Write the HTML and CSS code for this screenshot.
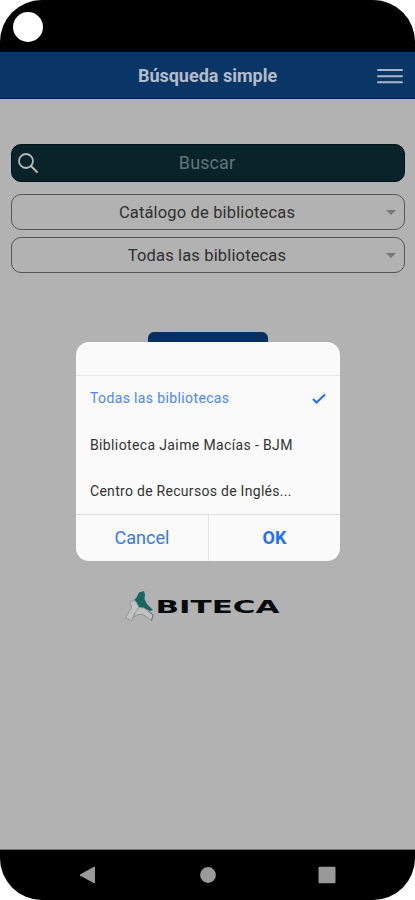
FILE: index.html
```html
<!DOCTYPE html>
<html lang="es">
<head>
<meta charset="utf-8">
<title>Búsqueda simple</title>
<link rel="stylesheet" href="styles.css">
</head>
<body>
<div class="phone">
  <div class="status"><span class="camera"></span></div>
  <header class="bar">
    <h1>Búsqueda simple</h1>
    <svg class="menu" width="26" height="16" viewBox="0 0 26 16"><path d="M1 2H25M1 8.2H25M1 14.3H25" stroke="#aab7c5" stroke-width="2" stroke-linecap="round"/></svg>
  </header>
  <main class="page">
    <div class="search">
      <svg class="lens" width="22" height="22" viewBox="0 0 22 22"><circle cx="9" cy="9" r="7" fill="none" stroke="#b5babb" stroke-width="1.8"/><path d="M14 14L20 20" stroke="#b5babb" stroke-width="2" stroke-linecap="round"/></svg>
      <span class="hint">Buscar</span>
    </div>
    <div class="select"><span class="value">Catálogo de bibliotecas</span><i class="caret"></i></div>
    <div class="select"><span class="value">Todas las bibliotecas</span><i class="caret"></i></div>
    <div class="submit"></div>
    <svg class="logo" width="160" height="34" viewBox="0 0 160 34">
      <path d="M14 3.5L19 2L20 5.5L19.5 10L22 15L28 21L25 22L19 19L13.5 18L9 11L11.5 8.5Z" fill="#1b6561"/>
      <path d="M5 12.5L10 11.5L13.5 17L14 20L9.5 25L6.5 31.5L0.5 29L6.5 19Z" fill="#c2c4c4" stroke="#8b8f8f" stroke-width=".8"/>
      <path d="M14 18.5L19 19L28 26L26.5 31.5L21 27.5L17 25L12 26L9 28L10 24Z" fill="#c2c4c4" stroke="#858b8b" stroke-width=".8"/>
      <path d="M23 22L28 26L26.5 31.5" fill="none" stroke="#5b7c7a"/>
      <text class="brand" x="30.5" y="24" textLength="124" lengthAdjust="spacingAndGlyphs">BITECA</text>
    </svg>
  </main>
  <nav class="nav">
    <svg width="18" height="18" viewBox="0 0 18 18"><path d="M1 9L15.5 1V17Z" fill="#999" stroke="#999" stroke-linejoin="round"/></svg>
    <svg width="18" height="18" viewBox="0 0 18 18"><circle cx="9" cy="9" r="7.9" fill="#999"/></svg>
    <svg width="18" height="18" viewBox="0 0 18 18"><rect x=".5" y=".8" width="17" height="16.5" rx="1" fill="#999"/></svg>
  </nav>
  <section class="dialog">
    <div class="dialog-head"></div>
    <div class="options">
      <div class="option chosen"><span>Todas las bibliotecas</span><svg width="16" height="14" viewBox="0 0 16 14"><path d="M2 8L5.5 11.5L14 3.5" fill="none" stroke="#2170f5" stroke-width="2"/></svg></div>
      <div class="option"><span>Biblioteca Jaime Macías - BJM</span></div>
      <div class="option last"><span>Centro de Recursos de Inglés...</span></div>
    </div>
    <div class="actions"><button>Cancel</button><button class="ok">OK</button></div>
  </section>
</div>
</body>
</html>
```

FILE: styles.css
```css
* { box-sizing: border-box; }
body { margin: 0; background: #fff; font-family: Roboto, "Liberation Sans", sans-serif; }
.phone {
  position: relative;
  width: 415px;
  height: 900px;
  overflow: hidden;
  border-radius: 42px;
  background: #b2b2b2;
  display: flex;
  flex-direction: column;
}
.status { height: 52px; background: #000; padding: 12px 0 0 13px; }
.camera { display: block; width: 30px; height: 30px; border-radius: 50%; background: #fff; }
.bar {
  height: 47px;
  padding-top: 2px;
  background: #0a3567;
  border-bottom: 1px solid #08205a;
  display: grid;
  grid-template-columns: 38px 1fr 38px;
  align-items: center;
}
.bar h1 { grid-column: 2; margin: 0; text-align: center; font-size: 18px; font-weight: 700; line-height: 24px; color: #b4bcc8; white-space: nowrap; }
.page { height: 751px; padding: 45px 10px 0 11px; border-bottom: 1px solid #777; }
.search {
  height: 38px;
  border-radius: 10px;
  background: #092429;
  border: 1px solid #031316;
  display: grid;
  grid-template-columns: 32px 1fr 32px;
  align-items: center;
  margin-bottom: 12px;
}
.lens { margin-left: 5px; }
.hint { text-align: center; color: #617579; font-size: 18px; letter-spacing: .1px; padding: 0 2px 2px 0; }
.select {
  height: 36px;
  margin-bottom: 7px;
  border: 1px solid #555;
  border-radius: 10px;
  display: grid;
  grid-template-columns: 26px 1fr 26px;
  align-items: center;
  font-size: 16.5px;
  letter-spacing: .15px;
  color: #303030;
  text-align: center;
}
.value { grid-column: 2; white-space: nowrap; padding-right: 2px; }
.caret { width: 0; height: 0; border: 5px solid transparent; border-top-color: #777; border-bottom: 0; margin-left: 8px; }
.submit { width: 120px; height: 40px; border-radius: 6px; background: #053060; margin: 59px 0 0 137px; }
.logo { display: block; margin: 217px 0 0 114px; }
.brand { font-family: "DejaVu Sans", sans-serif; font-weight: 700; font-size: 18px; fill: #080b0b; }
.nav { flex: 1; background: #000; display: flex; justify-content: space-between; align-items: center; padding: 0 79px; }
.dialog {
  position: absolute;
  left: 76px;
  top: 342px;
  width: 264px;
  height: 219px;
  background: #fafafa;
  border-radius: 13px;
  overflow: hidden;
}
.dialog-head { height: 34px; border-bottom: 1px solid #e9e9e9; }
.options { height: 138px; }
.option { height: 46.5px; padding: 0 13px 2px 14px; display: flex; align-items: center; justify-content: space-between; font-size: 14px; letter-spacing: .37px; color: #333; white-space: nowrap; }
.chosen { color: #4d86f5; }
.last { letter-spacing: .29px; }
.actions { height: 47px; border-top: 1px solid #dedede; display: grid; grid-template-columns: 133px 1fr; }
.actions button { border: 0; padding: 0 0 2px; background: none; font-family: inherit; font-size: 18px; color: #3478f6; border-right: 1px solid #e4e4e4; }
.actions .ok { font-weight: 700; border: 0; color: #2170f5; }
```
